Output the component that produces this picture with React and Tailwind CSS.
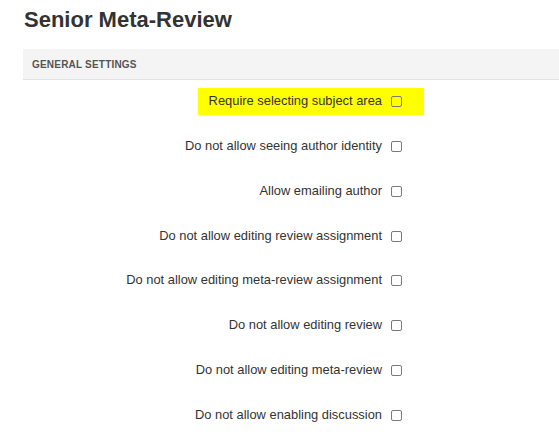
const options = [
    { label: "Require selecting subject area", highlight: true },
    { label: "Do not allow seeing author identity" },
    { label: "Allow emailing author" },
    { label: "Do not allow editing review assignment" },
    { label: "Do not allow editing meta-review assignment" },
    { label: "Do not allow editing review" },
    { label: "Do not allow editing meta-review" },
    { label: "Do not allow enabling discussion" },
];

function Checkbox() {
    return (
        <span className="block w-[11px] h-[11px] border border-[#7a7a7a] rounded-[2px] shrink-0" />
    );
}

function OptionRow({ label, highlight }) {
    return (
        <div className="h-[27px] flex justify-end">
            <div
                className={
                    highlight
                        ? "h-full flex items-center gap-[9px] pl-[11px] pr-[22px] bg-[#ffff00]"
                        : "h-full flex items-center gap-[9px] pr-[22px]"
                }
            >
                <span className="text-[12.9px] leading-none text-[#333]">{label}</span>
                <Checkbox />
            </div>
        </div>
    );
}

export default function App() {
    return (
        <div
            className="w-[559px] h-[435px] bg-white overflow-hidden"
            style={{ fontFamily: '"Liberation Sans", Arial, sans-serif' }}
        >
            <h1 className="mt-[7px] ml-[24px] text-[22px] leading-[25px] font-bold text-[#333]">
                Senior Meta-Review
            </h1>

            {/* settings panel */}
            <div className="mt-[17px] ml-[23px]">
                <div className="h-[31px] bg-[#f4f4f4] border-b border-[#e2e2e2] flex items-center pl-[9px]">
                    <span className="text-[10px] font-bold tracking-[0.2px] text-[#555]">
                        GENERAL SETTINGS
                    </span>
                </div>

                <div className="w-[401px] pt-[8px] flex flex-col gap-[17.85px]">
                    {options.map((opt, i) => (
                        <OptionRow key={i} label={opt.label} highlight={opt.highlight} />
                    ))}
                </div>
            </div>
        </div>
    );
}
